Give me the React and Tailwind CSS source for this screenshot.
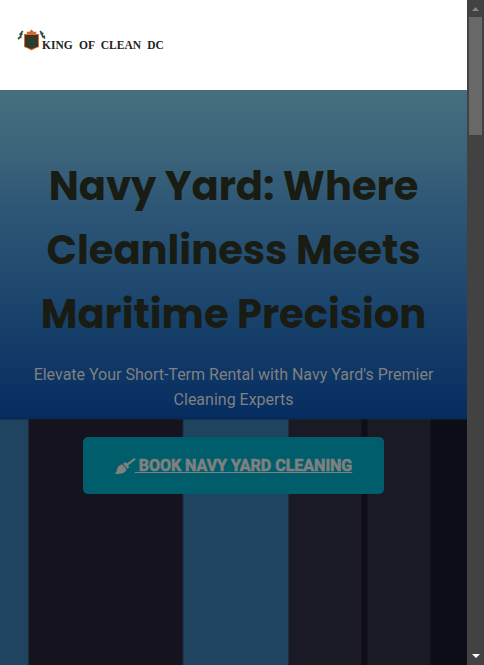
function Broom() {
  return (
    <svg width="21" height="16" viewBox="0 0 21 16" className="-mr-px block">
      <path d="M0 16 C0.8 14.5 1.6 13.8 1.8 12.5 C2.3 8.5 4.5 6.4 7.6 6.4 L11.4 11.2 C10.8 14.6 7.5 16 0 16Z" fill="#808080" />
      <path d="M8.2 5.8L10 4L11.8 5.6L19.4 0L20.8 1.6L13.2 7.2L14.2 9.4L12.1 10.8Z" fill="#808080" />
    </svg>
  );
}

function Crest() {
  return (
    <svg width="30" height="22" viewBox="0 0 30 22" className="block shrink-0">
      <path d="M1 10 L3 8.2 L4.5 8.4 M2.4 5.2 L5.6 5.2 M3.6 8 L4.2 4 L5.8 2 M23.2 2 L24.5 4 L25.5 7 L28 9.5 M23.5 5 L26.5 4.2 M25 8 L28 7" stroke="#304b35" strokeWidth="1.7" fill="none" />
      <path d="M9.5 5.5 L10 2.5 L12 3 L14.5 .5 L17 3 L19 2.5 L19.5 5.5Z" fill="#d86827" />
      <path d="M7 5H22V18Q18 19 14.5 21.5Q11 19 7 18Z" fill="#e46a25" />
      <path d="M8 6H21V17.4Q17 19 14.5 20Q12 19 8 17.4Z" fill="#303a2c" />
    </svg>
  );
}

function Header() {
  return (
    <header className="h-[90px] bg-white pl-[17px] pt-[29px]">
      <div className="flex">
        <Crest />
        <span className="-ml-[5px] mt-[9px] whitespace-nowrap font-['Liberation_Serif',serif] text-[11.5px] font-bold leading-[14px] tracking-[0px] text-[#242424] [word-spacing:3.4px]">KING OF CLEAN DC</span>
      </div>
    </header>
  );
}

function Scrollbar() {
  return (
    <aside className="flex h-full w-[17px] shrink-0 flex-col items-center justify-between bg-[#424242]">
      <div className="flex w-full flex-col items-center">
        <div className="flex h-[17px] items-center">
          <svg width="7" height="4" viewBox="0 0 7 4"><path d="M3.5 0L7 4H0Z" fill="#868686" /></svg>
        </div>
        <div className="h-[118px] w-[13px] bg-[#686868]" />
      </div>
      <div className="flex h-[19px] items-center">
        <svg width="8" height="4" viewBox="0 0 8 4"><path d="M0 0H8L4 4Z" fill="#fff" /></svg>
      </div>
    </aside>
  );
}

export default function App() {
  return (
    <div className="flex h-[665px] w-[484px] overflow-hidden">
      <div className="flex w-[467px] flex-col">
        <Header />
        <main className="flex h-[575px] flex-col items-center bg-[linear-gradient(to_bottom,#456f7e_0px,#3b637a_65px,#2b5475_128px,#214b70_185px,#153e69_245px,#052d61_327px,#0a294b_329px,transparent_330px),linear-gradient(to_right,#204360_0px,#204360_28px,#14131e_29px,#14131e_182px,#204360_184px,#204360_288px,#1a1a25_289px,#1a1a25_361px,#0e0d18_362px,#0e0d18_367px,#1a1a25_368px,#1a1a25_430px,#0d0d17_431px)] pt-16">
          <h1 className="flex flex-col items-center whitespace-nowrap font-[Poppins,Inter,sans-serif] text-[40px] font-bold leading-[64px] text-[#191c13]">
            <span>Navy Yard: Where</span>
            <span>Cleanliness Meets</span>
            <span>Maritime Precision</span>
          </h1>
          <p className="mt-4 text-center font-[Roboto,sans-serif] text-[16px] leading-[25px] text-[#808080]">
            Elevate Your Short-Term Rental with Navy Yard's Premier<br />Cleaning Experts
          </p>
          <a className="mt-[25px] flex h-[57px] w-[301px] items-center justify-center rounded-[5px] bg-[#005e6c] font-[Roboto,sans-serif] text-[16px] font-bold text-[#808080]">
            <Broom />
            <span className="whitespace-pre underline [-webkit-text-stroke:0.6px_#808080]">{" BOOK NAVY YARD CLEANING"}</span>
          </a>
        </main>
      </div>
      <Scrollbar />
    </div>
  );
}
